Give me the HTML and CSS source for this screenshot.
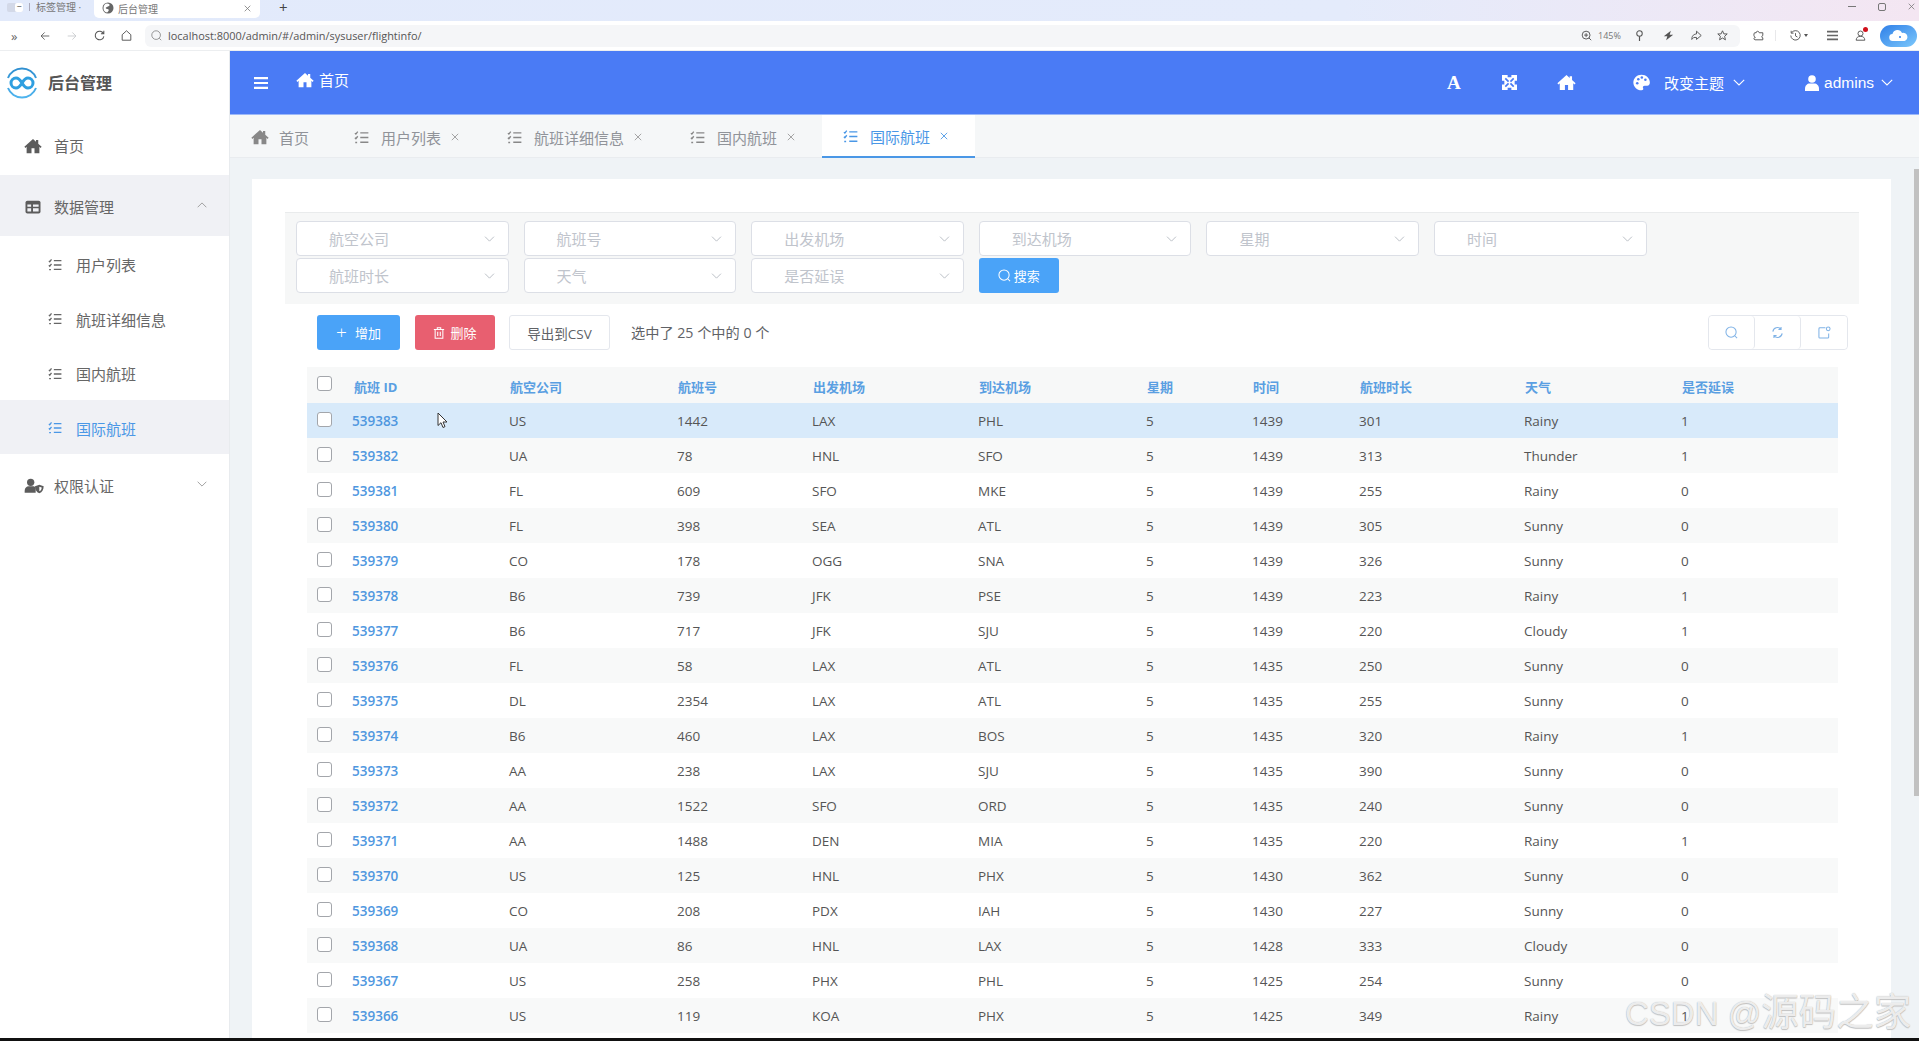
FILE: index.html
```html
<!DOCTYPE html>
<html lang="zh-CN">
<head>
<meta charset="utf-8">
<title>后台管理</title>
<link rel="stylesheet" href="styles.css">
</head>
<body>
<svg class="sprite" aria-hidden="true">
  <defs>
    <linearGradient id="ringg" x1="0" y1="0" x2="0" y2="1"><stop offset="0" stop-color="#2f8fd0"/><stop offset="1" stop-color="#4fb4ee"/></linearGradient>
    <linearGradient id="cloudg" x1="0" y1="0" x2="1" y2="1"><stop offset="0" stop-color="#2f7fe8"/><stop offset="1" stop-color="#7cc8fb"/></linearGradient>
  </defs>
  <symbol id="i-home" viewBox="0 0 24 24"><path fill="currentColor" d="M12 2.5 .5 13l1.4 1.5L3.500 13v8.500h6.500v-6.500h4v6.500h6.500V13l1.600 1.500 1.400-1.500L19 8.900V4h-3v2.200z"/></symbol>
  <symbol id="i-tasks" viewBox="0 0 24 24"><path fill="none" stroke="currentColor" stroke-width="2.200" d="M1.500 5l1.500 1.500L6 2.500M1.500 12.500 3 14l3-4M2 20h3M10 4.500h13M10 12h13M10 19.500h13"/></symbol>
  <symbol id="i-table" viewBox="0 0 24 24"><rect x="2" y="3.500" width="20" height="17" rx="2.500" fill="currentColor"/><path fill="#f0f1f5" d="M4.500 8.500h5v3h-5zM12 8.500h7.500v3H12zM4.500 13.500h5v4.500h-5zM12 13.500h7.500v4.500H12z"/></symbol>
  <symbol id="i-shield" viewBox="0 0 30 24"><circle cx="10" cy="6.500" r="5.500" fill="currentColor"/><path fill="currentColor" d="M1 22v-3c0-4 3-6.500 6-6.500h6c2 0 3.500.8 4.500 2V22z"/><path fill="currentColor" d="M23 10l6.500 2.500c0 5-2 9-6.500 10.500-4.500-1.500-6.500-5.500-6.500-10.500z"/><path fill="#fff" d="M23 13l3.500 1.300c0 2.500-1 4.800-3.500 5.700z"/></symbol>
  <symbol id="i-chev" viewBox="0 0 12 7"><path fill="none" stroke="currentColor" stroke-width="1.100" d="M.8.800 6 6l5.200-5.200"/></symbol>
  <symbol id="i-chevup" viewBox="0 0 12 7"><path fill="none" stroke="currentColor" stroke-width="1.100" d="M.8 6.200 6 1l5.200 5.200"/></symbol>
  <symbol id="i-x" viewBox="0 0 10 10"><path stroke="currentColor" stroke-width="1.100" d="M1 1l8 8M9 1 1 9"/></symbol>
  <symbol id="i-puzzle" viewBox="0 0 16 16"><path fill="currentColor" d="M0 0h6v2.500h4V0h6v6h-2.500v4H16v6h-6v-2.500H6V16H0v-6h2.500V6H0z"/><path fill="none" stroke="#4a7bf5" stroke-width="1.800" d="M3.500 3.500 7 7M12.500 3.500 9 7M3.500 12.500 7 9M12.500 12.500 9 9"/></symbol>
  <symbol id="i-palette" viewBox="0 0 24 24"><path fill="currentColor" d="M12 1C5.500 1 .5 6 .5 12S5.500 23 12 23c2.500 0 3-1.700 2.200-3.200-.9-1.700.2-3.300 2.300-3.300h3.500c2.500 0 3.800-2 3.800-4.500C23.800 6 18.500 1 12 1z"/><g fill="#4a7bf5"><circle cx="6" cy="13" r="1.800"/><circle cx="7.500" cy="7.500" r="1.800"/><circle cx="12.500" cy="5" r="1.800"/><circle cx="17.500" cy="8" r="1.800"/></g></symbol>
  <symbol id="i-user" viewBox="0 0 14 16"><circle cx="7" cy="4" r="3.800" fill="currentColor"/><path fill="currentColor" d="M0 16v-2.500C0 10.500 2.500 8.500 4.500 8.500h5c2 0 4.500 2 4.500 5V16z"/></symbol>
  <symbol id="i-menu" viewBox="0 0 14 12"><path fill="currentColor" d="M0 0h14v2.200H0zM0 4.900h14v2.200H0zM0 9.800h14V12H0z"/></symbol>
  <symbol id="i-search" viewBox="0 0 14 14"><circle cx="6.500" cy="6.500" r="5.500" fill="none" stroke="currentColor" stroke-width="1.100"/><path stroke="currentColor" stroke-width="1.100" d="M10.500 10.500 13 13"/></symbol>
  <symbol id="i-refresh" viewBox="0 0 14 14"><path fill="none" stroke="currentColor" stroke-width="1.200" d="M2 6a5 5 0 0 1 8.700-2.600M12 8a5 5 0 0 1-8.700 2.600M10.800 1v2.700H8M3.200 13v-2.700H6"/></symbol>
  <symbol id="i-export" viewBox="0 0 14 14"><path fill="none" stroke="currentColor" stroke-width="1.100" d="M8 2H2a1 1 0 0 0-1 1v9a1 1 0 0 0 1 1h8.500a1 1 0 0 0 1-1V8"/><circle cx="11" cy="3" r="2" fill="none" stroke="currentColor" stroke-width="1.100"/></symbol>
  <symbol id="i-trash" viewBox="0 0 14 14"><path fill="none" stroke="currentColor" stroke-width="1.200" d="M1 3h12M5 3V1h4v2M2.500 3v10h9V3M5.500 5.500v5M8.500 5.500v5"/></symbol>
</svg>

<header class="chrome-tabs">
  <span class="ct-switch"><i class="ct-sw-a"></i><i class="ct-sw-b">−</i></span>
  <span class="ct-sep"></span>
  <span class="ct-group">标签管理 ·</span>
  <div class="ct-tab">
    <svg class="ct-globe" viewBox="0 0 12 12"><circle cx="6" cy="6" r="5.500" fill="#666"/><path fill="#fff" d="M5 1.500c2 0 3 1 2.500 2S5 4.500 4 5.500s1.500 1.500 2.500 2-1 3-1.500 3c-2.500-.5-3.500-2-3.500-4.500S3 1.500 5 1.500z"/></svg>
    <span class="ct-title">后台管理</span>
    <svg class="ct-close"><use href="#i-x"/></svg>
  </div>
  <span class="ct-plus">+</span>
  <div class="ct-win">
    <span class="win-min"></span>
    <span class="win-max"></span>
    <svg class="win-x"><use href="#i-x"/></svg>
  </div>
</header>

<nav class="chrome-bar">
  <span class="nav-more">»</span>
  <svg class="nav-ic nav-back" viewBox="0 0 14 14"><path fill="none" stroke="currentColor" stroke-width="1.200" d="M13 7H1.500M6.500 2 1.500 7l5 5"/></svg>
  <svg class="nav-ic nav-fwd" viewBox="0 0 14 14"><path fill="none" stroke="currentColor" stroke-width="1.200" d="M1 7h11.500M7.500 2l5 5-5 5"/></svg>
  <svg class="nav-ic nav-reload" viewBox="0 0 14 14"><path fill="none" stroke="currentColor" stroke-width="1.300" d="M12 4.500A5.500 5.500 0 1 0 12.500 8M12.500 1v3.800H8.800"/></svg>
  <svg class="nav-ic nav-hm" viewBox="0 0 14 14"><path fill="none" stroke="currentColor" stroke-width="1.200" d="M1.500 13V6L7 1l5.500 5v7z"/></svg>
  <div class="addr">
    <svg class="addr-search"><use href="#i-search"/></svg>
    <span class="addr-url">localhost:8000/admin/#/admin/sysuser/flightinfo/</span>
    <div class="addr-right">
      <svg class="br-ic" viewBox="0 0 14 14"><circle cx="6.500" cy="6.500" r="5" fill="none" stroke="currentColor" stroke-width="1.200"/><path stroke="currentColor" stroke-width="1.200" d="M10 10l3 3M4 6.500h5M6.500 4v5"/></svg>
      <span class="addr-zoom">145%</span>
      <svg class="br-ic br-key" viewBox="0 0 14 14"><circle cx="7" cy="4.500" r="3.500" fill="none" stroke="currentColor" stroke-width="1.300"/><path stroke="currentColor" stroke-width="1.500" d="M7 8v6"/></svg>
      <svg class="br-ic br-bolt" viewBox="0 0 14 14"><path fill="currentColor" d="M10 1 1 8h4.500L4 13l9-7H8.500z"/></svg>
      <svg class="br-ic br-share" viewBox="0 0 14 14"><path fill="none" stroke="currentColor" stroke-width="1.200" d="M7 1.500 13 7l-6 5V9.500H3.500L1 12c0-3 1-6.500 6-7z"/></svg>
      <svg class="br-ic br-star" viewBox="0 0 14 14"><path fill="none" stroke="currentColor" stroke-width="1.200" d="M7 1l1.800 4H13l-3.300 3 1 4.500L7 10.200 3.300 12.500l1-4.500L1 5h4.200z"/></svg>
    </div>
  </div>
  <svg class="br-ic br-ext" viewBox="0 0 14 14"><path fill="none" stroke="currentColor" stroke-width="1.200" d="M4 3.500C4 1 7.500 1 8 3.500h4.500V7C11 7 10.500 10 12.500 10v2.500H2.500c-2-.5-1.500-3 .5-3C1 9 .5 5 2 3.500z"/></svg>
  <span class="br-div"></span>
  <svg class="br-ic br-clock" viewBox="0 0 14 14"><path fill="none" stroke="currentColor" stroke-width="1.200" d="M2 3.500A6 6 0 1 1 1 7M1.500 1v3h3M7 4v3.500l2.500 1.500"/></svg>
  <span class="br-caret"></span>
  <svg class="br-ic br-menu"><use href="#i-menu"/></svg>
  <span class="br-acct">
    <svg class="br-ic" viewBox="0 0 14 14"><circle cx="7" cy="4.500" r="3.200" fill="none" stroke="currentColor" stroke-width="1.200"/><path fill="none" stroke="currentColor" stroke-width="1.200" d="M1.500 13c0-3 2-5 5.500-5s5.500 2 5.500 5z"/></svg>
    <i class="br-dot"></i>
  </span>
  <svg class="br-cloud" viewBox="0 0 37 22"><rect width="37" height="22" rx="11" fill="url(#cloudg)"/><path fill="#fff" d="M13 16a3.500 3.500 0 0 1-.5-7 5 5 0 0 1 9.500-1 4 4 0 0 1 2.500 8z"/><circle cx="20" cy="12" r="1" fill="#2f7fe8"/></svg>
</nav>

<div class="app">
  <aside class="side">
    <div class="brand">
      <svg class="brand-logo" viewBox="0 0 34 34"><path fill="none" stroke="url(#ringg)" stroke-width="2" d="M3 12A15 15 0 0 1 31 12M31 22A15 15 0 0 1 3 22"/><path fill="none" stroke="#2f9fe0" stroke-width="3" d="M17 17c-2-3.500-3.500-5-6-5a5 5 0 0 0 0 10c2.500 0 4-1.500 6-5s3.500-5 6-5a5 5 0 0 1 0 10c-2.500 0-4-1.500-6-5z"/></svg>
      <span class="brand-name">后台管理</span>
    </div>
    <a class="mi"><svg class="mi-ic"><use href="#i-home"/></svg><span>首页</span></a>
    <a class="mi mi-open"><svg class="mi-ic"><use href="#i-table"/></svg><span>数据管理</span><svg class="mi-arrow"><use href="#i-chevup"/></svg></a>
    <a class="si"><svg class="si-ic"><use href="#i-tasks"/></svg><span>用户列表</span></a>
    <a class="si"><svg class="si-ic"><use href="#i-tasks"/></svg><span>航班详细信息</span></a>
    <a class="si"><svg class="si-ic"><use href="#i-tasks"/></svg><span>国内航班</span></a>
    <a class="si si-on"><svg class="si-ic"><use href="#i-tasks"/></svg><span>国际航班</span></a>
    <a class="mi"><svg class="mi-ic mi-ic-wide"><use href="#i-shield"/></svg><span>权限认证</span><svg class="mi-arrow"><use href="#i-chev"/></svg></a>
  </aside>

  <main class="main">
    <div class="top">
      <svg class="top-menu"><use href="#i-menu"/></svg>
      <svg class="top-home"><use href="#i-home"/></svg>
      <span class="top-crumb">首页</span>
      <div class="top-right">
        <span class="top-a">A</span>
        <svg class="top-puz"><use href="#i-puzzle"/></svg>
        <svg class="top-hm"><use href="#i-home"/></svg>
        <svg class="top-pal"><use href="#i-palette"/></svg>
        <span class="top-theme">改变主题</span>
        <svg class="top-chev"><use href="#i-chev"/></svg>
        <svg class="top-user"><use href="#i-user"/></svg>
        <span class="top-name">admins</span>
        <svg class="top-chev top-chev-b"><use href="#i-chev"/></svg>
      </div>
    </div>

    <div class="tabs">
      <a class="tab"><svg class="tab-ic tab-ic-h"><use href="#i-home"/></svg><span>首页</span></a>
      <a class="tab"><svg class="tab-ic"><use href="#i-tasks"/></svg><span>用户列表</span><svg class="tab-x"><use href="#i-x"/></svg></a>
      <a class="tab"><svg class="tab-ic"><use href="#i-tasks"/></svg><span>航班详细信息</span><svg class="tab-x"><use href="#i-x"/></svg></a>
      <a class="tab"><svg class="tab-ic"><use href="#i-tasks"/></svg><span>国内航班</span><svg class="tab-x"><use href="#i-x"/></svg></a>
      <a class="tab tab-on"><svg class="tab-ic"><use href="#i-tasks"/></svg><span>国际航班</span><svg class="tab-x"><use href="#i-x"/></svg></a>
    </div>

    <div class="content">
      <section class="card">
        <div class="filter">
          <div class="sel"><span>航空公司</span><svg><use href="#i-chev"/></svg></div>
          <div class="sel"><span>航班号</span><svg><use href="#i-chev"/></svg></div>
          <div class="sel"><span>出发机场</span><svg><use href="#i-chev"/></svg></div>
          <div class="sel"><span>到达机场</span><svg><use href="#i-chev"/></svg></div>
          <div class="sel"><span>星期</span><svg><use href="#i-chev"/></svg></div>
          <div class="sel"><span>时间</span><svg><use href="#i-chev"/></svg></div>
          <div class="sel"><span>航班时长</span><svg><use href="#i-chev"/></svg></div>
          <div class="sel"><span>天气</span><svg><use href="#i-chev"/></svg></div>
          <div class="sel"><span>是否延误</span><svg><use href="#i-chev"/></svg></div>
          <button class="btn-search"><svg><use href="#i-search"/></svg>搜索</button>
        </div>

        <div class="toolbar">
          <button class="btn btn-add"><span class="btn-plus">+</span>增加</button>
          <button class="btn btn-del"><svg><use href="#i-trash"/></svg>删除</button>
          <button class="btn btn-csv">导出到CSV</button>
          <span class="sel-count">选中了 25 个中的 0 个</span>
          <div class="tool-group">
            <button><svg><use href="#i-search"/></svg></button>
            <button><svg><use href="#i-refresh"/></svg></button>
            <button><svg><use href="#i-export"/></svg></button>
          </div>
        </div>

        <table class="grid">
          <thead>
            <tr><th><i class="cb"></i></th><th>航班 ID</th><th>航空公司</th><th>航班号</th><th>出发机场</th><th>到达机场</th><th>星期</th><th>时间</th><th>航班时长</th><th>天气</th><th>是否延误</th></tr>
          </thead>
          <tbody>
            <tr class="hover"><td><i class="cb"></i></td><td><a>539383</a></td><td>US</td><td>1442</td><td>LAX</td><td>PHL</td><td>5</td><td>1439</td><td>301</td><td>Rainy</td><td>1</td></tr>
            <tr><td><i class="cb"></i></td><td><a>539382</a></td><td>UA</td><td>78</td><td>HNL</td><td>SFO</td><td>5</td><td>1439</td><td>313</td><td>Thunder</td><td>1</td></tr>
            <tr><td><i class="cb"></i></td><td><a>539381</a></td><td>FL</td><td>609</td><td>SFO</td><td>MKE</td><td>5</td><td>1439</td><td>255</td><td>Rainy</td><td>0</td></tr>
            <tr><td><i class="cb"></i></td><td><a>539380</a></td><td>FL</td><td>398</td><td>SEA</td><td>ATL</td><td>5</td><td>1439</td><td>305</td><td>Sunny</td><td>0</td></tr>
            <tr><td><i class="cb"></i></td><td><a>539379</a></td><td>CO</td><td>178</td><td>OGG</td><td>SNA</td><td>5</td><td>1439</td><td>326</td><td>Sunny</td><td>0</td></tr>
            <tr><td><i class="cb"></i></td><td><a>539378</a></td><td>B6</td><td>739</td><td>JFK</td><td>PSE</td><td>5</td><td>1439</td><td>223</td><td>Rainy</td><td>1</td></tr>
            <tr><td><i class="cb"></i></td><td><a>539377</a></td><td>B6</td><td>717</td><td>JFK</td><td>SJU</td><td>5</td><td>1439</td><td>220</td><td>Cloudy</td><td>1</td></tr>
            <tr><td><i class="cb"></i></td><td><a>539376</a></td><td>FL</td><td>58</td><td>LAX</td><td>ATL</td><td>5</td><td>1435</td><td>250</td><td>Sunny</td><td>0</td></tr>
            <tr><td><i class="cb"></i></td><td><a>539375</a></td><td>DL</td><td>2354</td><td>LAX</td><td>ATL</td><td>5</td><td>1435</td><td>255</td><td>Sunny</td><td>0</td></tr>
            <tr><td><i class="cb"></i></td><td><a>539374</a></td><td>B6</td><td>460</td><td>LAX</td><td>BOS</td><td>5</td><td>1435</td><td>320</td><td>Rainy</td><td>1</td></tr>
            <tr><td><i class="cb"></i></td><td><a>539373</a></td><td>AA</td><td>238</td><td>LAX</td><td>SJU</td><td>5</td><td>1435</td><td>390</td><td>Sunny</td><td>0</td></tr>
            <tr><td><i class="cb"></i></td><td><a>539372</a></td><td>AA</td><td>1522</td><td>SFO</td><td>ORD</td><td>5</td><td>1435</td><td>240</td><td>Sunny</td><td>0</td></tr>
            <tr><td><i class="cb"></i></td><td><a>539371</a></td><td>AA</td><td>1488</td><td>DEN</td><td>MIA</td><td>5</td><td>1435</td><td>220</td><td>Rainy</td><td>1</td></tr>
            <tr><td><i class="cb"></i></td><td><a>539370</a></td><td>US</td><td>125</td><td>HNL</td><td>PHX</td><td>5</td><td>1430</td><td>362</td><td>Sunny</td><td>0</td></tr>
            <tr><td><i class="cb"></i></td><td><a>539369</a></td><td>CO</td><td>208</td><td>PDX</td><td>IAH</td><td>5</td><td>1430</td><td>227</td><td>Sunny</td><td>0</td></tr>
            <tr><td><i class="cb"></i></td><td><a>539368</a></td><td>UA</td><td>86</td><td>HNL</td><td>LAX</td><td>5</td><td>1428</td><td>333</td><td>Cloudy</td><td>0</td></tr>
            <tr><td><i class="cb"></i></td><td><a>539367</a></td><td>US</td><td>258</td><td>PHX</td><td>PHL</td><td>5</td><td>1425</td><td>254</td><td>Sunny</td><td>0</td></tr>
            <tr><td><i class="cb"></i></td><td><a>539366</a></td><td>US</td><td>119</td><td>KOA</td><td>PHX</td><td>5</td><td>1425</td><td>349</td><td>Rainy</td><td>1</td></tr>
          </tbody>
        </table>
      </section>
    </div>
    <span class="scroll-thumb"></span>
  </main>
</div>
<div class="bottom-bar"></div>

<svg class="cursor" viewBox="0 0 11 17"><path fill="#fff" stroke="#333" stroke-width="1" d="M1 1v12.500l3-2.800 2 4.800 2-.9-2-4.600h4z"/></svg>
<div class="watermark"><span class="wm-l">CSDN @</span><span class="wm-c">源码之家</span></div>
</body>
</html>
```
FILE: styles.css
```css
* { box-sizing: border-box; }
html, body { margin: 0; height: 100%; overflow: hidden; }
body {
  width: 1919px; height: 1041px; position: relative; background: #fff;
  font-family: "Open Sans", "Noto Sans CJK SC", sans-serif; color: #606266;
}
i { font-style: normal; display: block; }
button { font-family: inherit; cursor: pointer; }
.sprite { position: absolute; width: 0; height: 0; }

/* browser chrome */
.chrome-tabs {
  height: 21px; display: flex; align-items: flex-start; position: relative;
  background: linear-gradient(90deg, #e2eafb 0%, #e4ebfb 70%, #f4e6f2 100%);
}
.ct-switch { display: flex; margin: 3px 0 0 7px; width: 16px; height: 9px; background: #d3d9e8; border-radius: 2px; }
.ct-sw-a { width: 8px; }
.ct-sw-b { width: 8px; height: 9px; background: #fff; border-radius: 2px; font-size: 9px; line-height: 8px; text-align: center; color: #444; }
.ct-sep { width: 1px; height: 8px; background: #aab; margin: 3px 0 0 6px; }
.ct-group { font-size: 10px; line-height: 14px; color: #777; margin-left: 6px; width: 58px; }
.ct-tab {
  width: 166px; height: 18px; background: #fff; border-radius: 0 0 5px 5px;
  display: flex; align-items: center; padding: 0 9px 2px 8px;
}
.ct-globe { width: 12px; height: 12px; }
.ct-title { font-size: 10px; color: #777; margin-left: 4px; }
.ct-close { width: 7px; height: 7px; margin-left: auto; color: #777; }
.ct-plus { font-size: 15px; line-height: 15px; color: #444; margin-left: 19px; }
.ct-win { margin-left: auto; display: flex; align-items: center; height: 13px; margin-top: 0; padding-right: 4px; }
.win-min { width: 8px; height: 1px; background: #777; }
.win-max { width: 8px; height: 8px; border: 1px solid #777; border-radius: 2px; margin-left: 22px; }
.win-x { width: 7px; height: 7px; color: #777; margin-left: 22px; }

.chrome-bar { height: 30px; display: flex; align-items: center; background: #fff; border-bottom: 1px solid #eceef0; color: #555; }
.nav-more { font-size: 13px; line-height: 14px; width: 10px; margin-left: 11px; color: #666; }
.nav-ic { width: 10px; height: 10px; }
.nav-back { margin-left: 19px; }
.nav-fwd { margin-left: 17px; color: #c6c8cc; }
.nav-reload { margin-left: 17px; width: 11px; height: 11px; }
.nav-hm { margin-left: 16px; width: 11px; height: 11px; }
.addr {
  width: 1595px; height: 22px; margin-left: 13px; background: #f5f6f8; border-radius: 6px;
  display: flex; align-items: center; padding: 0 0 0 6px;
}
.addr-search { width: 11px; height: 11px; color: #888; }
.addr-url { font-size: 10.950px; color: #555; margin-left: 6px; }
.addr-right { margin-left: auto; display: flex; align-items: center; }
.br-ic { width: 11px; height: 11px; display: block; color: #555; }
.addr-zoom { font-size: 9px; color: #777; margin-left: 6px; width: 22px; }
.br-key { margin-left: 14px; }
.br-bolt { margin-left: 18px; }
.br-share { margin-left: 17px; }
.br-star { margin-left: 15px; margin-right: 12px; }
.br-ext { margin-left: 13px; }
.br-div { width: 1px; height: 11px; background: #e8e8ea; margin-left: 11px; }
.br-clock { margin-left: 14px; }
.br-caret { border-top: 3px solid #555; border-left: 2px solid transparent; border-right: 2px solid transparent; margin-left: 3px; }
.br-menu { margin-left: 19px; color: #666; }
.br-acct { position: relative; margin-left: 17px; }
.br-dot { position: absolute; right: -2px; top: -3px; width: 5px; height: 5px; border-radius: 50%; background: #d0101c; }
.br-cloud { width: 37px; height: 22px; margin-left: 14px; }

/* app frame */
.app { height: 987px; display: flex; overflow: hidden; }
.side { width: 230px; flex: none; background: #fff; border-right: 1px solid #e8ebee; font-size: 15px; color: #666; }
.brand { height: 63px; display: flex; align-items: center; padding-left: 5px; }
.brand-logo { width: 34px; height: 34px; }
.brand-name { font-size: 16px; font-weight: 700; color: #555; margin: -2px 0 0 9px; }
.mi { height: 61px; display: flex; align-items: center; padding: 2px 22px 0 24px; }
.mi-open { background: #f0f1f5; }
.mi-ic { width: 18px; height: 18px; color: #5c5c5c; margin-right: 12px; }
.mi-ic-wide { width: 20px; margin-right: 10px; }
.mi-arrow { width: 10px; height: 6px; margin-left: auto; margin-top: -4px; color: #999; }
.si { height: 54.500px; display: flex; align-items: center; padding: 3px 0 0 48px; }
.si-ic { width: 14px; height: 14px; margin-right: 14px; color: #666; }
.si-on { background: #f0f1f5; color: #4a97e6; }
.si-on .si-ic { color: #4a97e6; }

.main { flex: 1; min-width: 0; display: flex; flex-direction: column; position: relative; background: #eff3f6; }
.top {
  height: 64px; flex: none; background: #4a7bf5; border-bottom: 1px solid #9cb8f8; color: #fff;
  display: flex; align-items: center; padding-left: 24px;
}
.top-menu { width: 14px; height: 12px; }
.top-home { width: 18px; height: 18px; margin-left: 28px; margin-top: -5px; }
.top-crumb { font-size: 15px; margin-left: 5px; margin-top: -6px; }
.top-right { margin-left: auto; display: flex; align-items: center; padding-right: 26px; }
.top-a { font-family: "Liberation Serif", serif; font-weight: 700; font-size: 19px; line-height: 20px; width: 13px; }
.top-puz { width: 15px; height: 15px; margin-left: 42px; }
.top-hm { width: 19px; height: 19px; margin-left: 40px; }
.top-pal { width: 17px; height: 17px; margin-left: 57px; }
.top-theme { font-size: 15px; margin-left: 14px; }
.top-chev { width: 12px; height: 7px; margin-left: 9px; }
.top-user { width: 14px; height: 16px; margin-left: 60px; }
.top-name { font-family: "Liberation Sans", sans-serif; font-size: 15.500px; margin-left: 5px; }
.top-chev-b { margin-left: 7px; }

.tabs { height: 43px; flex: none; background: #f5f7f8; border-bottom: 1px solid #e9ecef; display: flex; font-size: 15px; color: #909399; }
.tab { display: flex; align-items: center; padding: 1px 24px 0 21px; height: 43px; }
.tab-ic { width: 15px; height: 15px; margin-right: 12px; color: #888; }
.tab-ic-h { width: 18px; height: 18px; margin-right: 10px; }
.tab-x { width: 8px; height: 8px; margin-left: 10px; margin-right: 3px; color: #999; }
.tab-on { background: #fff; color: #4a97e6; border-bottom: 2px solid #4a97e6; }
.tab-on .tab-ic, .tab-on .tab-x { color: #4a97e6; }

.content { flex: 1; min-height: 0; padding: 21px 28px 0 22px; overflow: hidden; }
.card { background: #fff; padding: 33px 32px 0 33px; height: 900px; }
.filter {
  background: #f6f7f7; border-top: 1px solid #e9ebec; height: 92px;
  padding: 8px 0 0 11px; display: grid; grid-template-columns: repeat(6, 212.600px); column-gap: 15px; row-gap: 2px; align-content: start;
}
.sel {
  height: 35px; background: #fff; border: 1px solid #dcdfe6; border-radius: 4px;
  display: flex; align-items: center; padding: 0 13px 0 32px; font-size: 15px; color: #c0c4cc;
}
.sel svg { width: 11px; height: 6px; margin-left: auto; color: #b8bcc4; }
.btn-search {
  width: 80px; height: 35px; background: #4aa3f8; border: 0; border-radius: 3px; color: #fff; font-size: 13px;
  display: flex; align-items: center; justify-content: center; gap: 3px; padding: 0;
}
.btn-search svg { width: 13px; height: 13px; }

.toolbar { display: flex; align-items: center; height: 35px; margin-top: 11px; padding: 0 11px 0 32px; }
.btn { height: 35px; border-radius: 3px; font-size: 13px; display: flex; align-items: center; justify-content: center; padding: 0; border: 0; color: #fff; }
.btn-add { width: 83px; background: #4aa3f8; margin-right: 15px; }
.btn-plus { font-size: 19px; line-height: 19px; font-weight: 300; margin-right: 8px; }
.btn-del { width: 80px; background: #e85f70; margin-right: 14px; }
.btn-del svg { width: 12px; height: 12px; margin-right: 5px; }
.btn-csv { width: 101px; background: #fff; border: 1px solid #e4e7ed; color: #606266; margin-right: 21px; font-size: 13.500px; }
.sel-count { font-size: 14.200px; color: #606266; margin-top: -2px; }
.tool-group { margin-left: auto; display: flex; border: 1px solid #e4e7ed; border-radius: 4px; height: 35px; }
.tool-group button { width: 46px; background: #fff; border: 0; border-right: 1px solid #e4e7ed; display: flex; align-items: center; justify-content: center; padding: 0; color: #7fb2e6; border-radius: 4px; }
.tool-group button:last-child { border-right: 0; }
.tool-group svg { width: 13px; height: 13px; }

.grid { margin: 17px 0 0 22px; width: 1531px; table-layout: fixed; border-collapse: collapse; font-size: 13.500px; color: #555; }
.grid th:nth-child(1) { width: 44px; }
.grid th:nth-child(2) { width: 156px; }
.grid th:nth-child(3) { width: 168px; }
.grid th:nth-child(4) { width: 135px; }
.grid th:nth-child(5) { width: 166px; }
.grid th:nth-child(6) { width: 168px; }
.grid th:nth-child(7) { width: 106px; }
.grid th:nth-child(8) { width: 107px; }
.grid th:nth-child(9) { width: 165px; }
.grid th:nth-child(10) { width: 157px; }
.grid th:nth-child(11) { width: 159px; }
.grid thead tr { height: 36px; background: #f7f8f8; }
.grid th { text-align: left; font-size: 13px; font-weight: 700; color: #5a9fe2; padding: 2px 0 0 3px; }
.grid td { height: 35px; padding: 1px 0 0 2px; white-space: nowrap; }
.grid tbody tr:nth-child(even) { background: #f8f9f9; }
.grid tbody tr.hover { background: #d8eafa; }
.grid td:nth-child(2) { padding-left: 1px; }
.grid a { color: #4f97df; font-weight: 600; }
.grid th:first-child, .grid td:first-child { padding: 0 0 3px 10px; }
.cb { width: 15px; height: 15px; background: #fff; border: 1.500px solid #a3a6ab; border-radius: 3px; }

.scroll-thumb { position: absolute; right: 0; top: 118px; width: 5px; height: 627px; background: #c1c1c1; }
.bottom-bar { height: 3px; background: #111; }

/* overlays */
.cursor { position: absolute; left: 437px; top: 412px; width: 11px; height: 17px; }
.watermark {
  position: absolute; left: 1625px; top: 981px; white-space: nowrap; color: rgba(255,255,255,.8);
  text-shadow: 0 0 1px #a8a8a8, 0 1px 1px #c4c4c4;
}
.wm-l { font-family: "Liberation Sans", sans-serif; font-size: 33px; }
.wm-c { font-size: 37.500px; }
```
